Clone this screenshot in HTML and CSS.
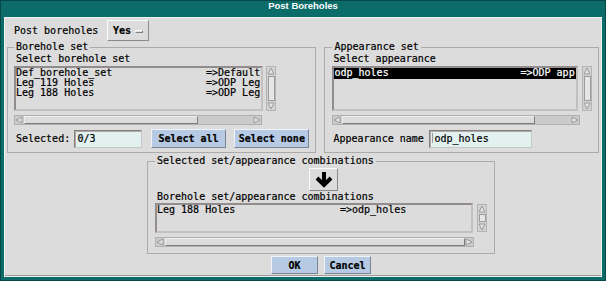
FILE: index.html
```html
<!DOCTYPE html>
<html lang="en">
<head>
    <meta charset="UTF-8">
    <title>Post Boreholes</title>
    <link rel="stylesheet" href="styles.css">
</head>
<body>
<div class="window">
    <div class="titlebar">Post Boreholes</div>
    <div class="dialog">
        <!-- Post boreholes option menu -->
        <div class="post-row">
            <span class="post-label">Post boreholes</span>
            <div class="option-btn">Yes<span class="option-mark"></span></div>
        </div>

        <div class="sets">
            <!-- Borehole set -->
            <fieldset class="frame borehole-frame">
                <legend>Borehole set</legend>
                <div class="sub">Select borehole set</div>
                <div class="list-row">
                    <div class="list list-sets">
                        <div class="item"><span class="name">Def_borehole_set</span><span>=&gt;Default</span></div>
                        <div class="item"><span class="name">Leg 119 Holes</span><span>=&gt;ODP Leg</span></div>
                        <div class="item"><span class="name">Leg 188 Holes</span><span>=&gt;ODP Leg</span></div>
                    </div>
                    <div class="vscroll">
                        <svg class="arr" viewBox="0 0 8 8"><polygon points="4,1 7,7 1,7"/></svg>
                        <div class="vthumb"></div>
                        <svg class="arr" viewBox="0 0 8 8"><polygon points="1,1 7,1 4,7"/></svg>
                    </div>
                </div>
                <div class="hscroll hs-sets">
                    <svg class="arr" viewBox="0 0 8 8"><polygon points="1,4 7,1 7,7"/></svg>
                    <div class="hthumb"></div>
                    <div class="trough"></div>
                    <svg class="arr" viewBox="0 0 8 8"><polygon points="1,1 7,4 1,7"/></svg>
                </div>
                <div class="field-row">
                    <span class="field-label sel-label">Selected:</span>
                    <div class="text-input sel-input">0/3</div>
                    <button class="btn btn-wide">Select all</button>
                    <button class="btn btn-wide">Select none</button>
                </div>
            </fieldset>

            <!-- Appearance set -->
            <fieldset class="frame appearance-frame">
                <legend>Appearance set</legend>
                <div class="sub">Select appearance</div>
                <div class="list-row">
                    <div class="list list-app">
                        <div class="item item-on"><span class="name name-app">odp_holes</span><span>=&gt;ODP app</span></div>
                    </div>
                    <div class="vscroll">
                        <svg class="arr" viewBox="0 0 8 8"><polygon points="4,1 7,7 1,7"/></svg>
                        <div class="vthumb"></div>
                        <svg class="arr" viewBox="0 0 8 8"><polygon points="1,1 7,1 4,7"/></svg>
                    </div>
                </div>
                <div class="hscroll hs-app">
                    <svg class="arr" viewBox="0 0 8 8"><polygon points="1,4 7,1 7,7"/></svg>
                    <div class="hthumb"></div>
                    <div class="trough"></div>
                    <svg class="arr" viewBox="0 0 8 8"><polygon points="1,1 7,4 1,7"/></svg>
                </div>
                <div class="field-row">
                    <span class="field-label app-label">Appearance name</span>
                    <div class="text-input app-input"><span class="caret"></span>odp_holes</div>
                </div>
            </fieldset>
        </div>

        <!-- Combinations -->
        <div class="combo-wrap">
            <fieldset class="frame combo-frame">
                <legend>Selected set/appearance combinations</legend>
                <div class="arrow-btn">
                    <svg viewBox="0 0 18 16" width="18" height="16">
                        <line x1="9" y1="0" x2="9" y2="13" stroke="#000" stroke-width="4"/>
                        <polyline points="2,6 9,13 16,6" fill="none" stroke="#000" stroke-width="4"/>
                    </svg>
                </div>
                <div class="sub">Borehole set/appearance combinations</div>
                <div class="list-row combo-row">
                    <div class="list list-combo">
                        <div class="item"><span class="name name-combo">Leg 188 Holes</span><span>=&gt;odp_holes</span></div>
                    </div>
                    <div class="vscroll vs-combo">
                        <svg class="arr" viewBox="0 0 8 8"><polygon points="4,1 7,7 1,7"/></svg>
                        <div class="vthumb vthumb-small"></div>
                        <svg class="arr" viewBox="0 0 8 8"><polygon points="1,1 7,1 4,7"/></svg>
                    </div>
                </div>
                <div class="hscroll hs-combo">
                    <svg class="arr" viewBox="0 0 8 8"><polygon points="1,4 7,1 7,7"/></svg>
                    <div class="hthumb"></div>
                    <div class="trough"></div>
                    <svg class="arr" viewBox="0 0 8 8"><polygon points="1,1 7,4 1,7"/></svg>
                </div>
            </fieldset>

            <div class="actions">
                <button class="btn btn-small">OK</button>
                <button class="btn btn-small">Cancel</button>
            </div>
        </div>
    </div>
</div>
</body>
</html>
```

FILE: styles.css
```css
* {
    box-sizing: border-box;
}
body {
    margin: 0;
    background: #0b6c69;
    font-family: "DejaVu Sans Mono", "Liberation Mono", monospace;
    font-size: 10px;
    color: #000;
    -webkit-text-stroke: 0.2px;
}
.window {
    width: 606px;
    height: 281px;
    display: flex;
    flex-direction: column;
    padding: 0 4px 4px;
    background: #0b6c69;
    box-shadow: inset 0 0 0 1px #064845;
}
.titlebar {
    flex: none;
    height: 17px;
    line-height: 18px;
    text-align: center;
    color: #fff;
    font: bold 9.5px "Liberation Sans", Arial, sans-serif;
    -webkit-text-stroke: 0;
}
.dialog {
    flex: 1;
    background: #dcdcdc;
    border: 1px solid #f0f0f0;
    box-shadow: inset 0 -1px 0 #9a9a9a;
}

/* Post boreholes row */
.post-row {
    display: flex;
    align-items: center;
    height: 21px;
    margin-top: 2px;
    padding-left: 9px;
}
.post-label {
    width: 93px;
}
.option-btn {
    width: 42px;
    height: 21px;
    display: flex;
    align-items: center;
    padding-left: 5px;
    font-weight: bold;
    border: 1px solid;
    border-color: #fafafa #8a8a8a #8a8a8a #fafafa;
}
.option-mark {
    width: 8px;
    height: 3px;
    margin: 1px 0 0 4px;
    border: 1px solid;
    border-color: #fafafa #808080 #808080 #fafafa;
}

/* Frames */
.sets {
    display: flex;
    gap: 8px;
    padding: 0 2px;
}
.frame {
    margin: 0;
    min-width: 0;
    padding: 0 6px 4px;
    border: 1px solid #ababab;
}
.frame legend {
    padding: 0 2px;
    line-height: 12px;
}
.borehole-frame {
    width: 310px;
}
.appearance-frame {
    width: 275px;
    padding-left: 7px;
}
.sub {
    padding-left: 2px;
    line-height: 12px;
}
.appearance-frame .sub {
    padding-left: 1px;
}

/* Lists */
.list-row {
    display: flex;
    gap: 3px;
    margin-top: 1px;
}
.appearance-frame .list-row {
    gap: 4px;
}
.list {
    width: 249px;
    height: 45px;
    overflow: hidden;
    border: 2px solid;
    border-color: #928c8c #c4c0c0 #c4c0c0 #928c8c;
}
.item {
    display: flex;
    height: 10px;
    line-height: 10px;
    white-space: nowrap;
}
.item .name {
    flex: none;
    width: 190px;
}
.item .name-app {
    width: 186px;
}
.item .name-combo {
    width: 183px;
}
.item-on {
    background: #000;
    color: #fff;
    height: 11px;
}

/* Scrollbars */
.arr {
    flex: none;
    width: 8px;
    height: 8px;
}
.arr polygon {
    fill: #e4e4e4;
    stroke: #9a9a9a;
    stroke-width: 1;
}
.vscroll {
    flex: none;
    width: 10px;
    height: 45px;
    display: flex;
    flex-direction: column;
    align-items: center;
    border: 1px solid #b4b4b4;
    background: #d2d2d2;
}
.vthumb {
    flex: 1;
    width: 7px;
    margin: 1px 0;
    background: #e6e6e6;
    border: 1px solid #9c9c9c;
}
.hscroll {
    display: flex;
    align-items: center;
    height: 10px;
    margin-top: 4px;
    border: 1px solid #b0b0b0;
    background: #cbcbcb;
}
.hthumb {
    height: 8px;
    margin-left: 1px;
    background: #dcdcdc;
    border: 1px solid;
    border-color: #eeeeee #7c7c7c #7c7c7c #eeeeee;
}
.trough {
    flex: 1;
}
.hs-sets {
    width: 248px;
}
.hs-sets .hthumb {
    width: 174px;
}
.hs-app {
    width: 248px;
}
.hs-app .hthumb {
    width: 193px;
}

/* Inputs and buttons */
.field-row {
    display: flex;
    align-items: center;
    height: 19px;
    margin-top: 4px;
}
.field-label {
    padding-left: 2px;
}
.sel-label {
    width: 61px;
}
.app-label {
    padding-left: 1px;
    width: 97px;
}
.text-input {
    display: flex;
    align-items: flex-start;
    height: 18px;
    padding: 2px 2px 0;
    line-height: 11px;
    white-space: nowrap;
    background: #e2f1ef;
    border: 1px solid;
    border-color: #857d7d #c8c8c8 #c8c8c8 #857d7d;
    box-shadow: inset 1px 1px 0 #b0a8a8;
}
.sel-input {
    width: 68px;
}
.app-input {
    width: 103px;
}
.caret {
    width: 1px;
    height: 10px;
    margin: 0 1px 0 0;
    background: #9a9a9a;
}
.btn {
    height: 19px;
    margin: 0;
    padding: 0;
    font: bold 10px "DejaVu Sans Mono", "Liberation Mono", monospace;
    color: #000;
    background: #b6cae3;
    border: 1px solid;
    border-color: #eef4fb #7a8494 #7a8494 #eef4fb;
}
.btn-wide {
    width: 76px;
    margin-left: 8px;
}
.sel-input + .btn-wide {
    margin-left: 9px;
}

/* Combinations */
.combo-wrap {
    width: 348px;
    margin: 2px 0 0 142px;
}
.combo-frame {
    padding: 0 7px 6px;
}
.arrow-btn {
    width: 29px;
    height: 23px;
    margin: 1px 0 0 154px;
    display: flex;
    align-items: center;
    justify-content: center;
    border: 1px solid;
    border-color: #fafafa #8a8a8a #8a8a8a #fafafa;
}
.combo-row {
    gap: 4px;
    align-items: center;
    margin-top: 0;
}
.list-combo {
    width: 320px;
    height: 30px;
}
.vs-combo {
    height: 28px;
}
.vthumb-small {
    flex: none;
    height: 8px;
}
.vs-combo .arr:last-child {
    margin-top: auto;
}
.hs-combo {
    width: 319px;
}
.hs-combo .hthumb {
    width: 300px;
}

.actions {
    display: flex;
    justify-content: center;
    gap: 6px;
    margin-top: 2px;
}
.btn-small {
    width: 47px;
    height: 18px;
}
```
